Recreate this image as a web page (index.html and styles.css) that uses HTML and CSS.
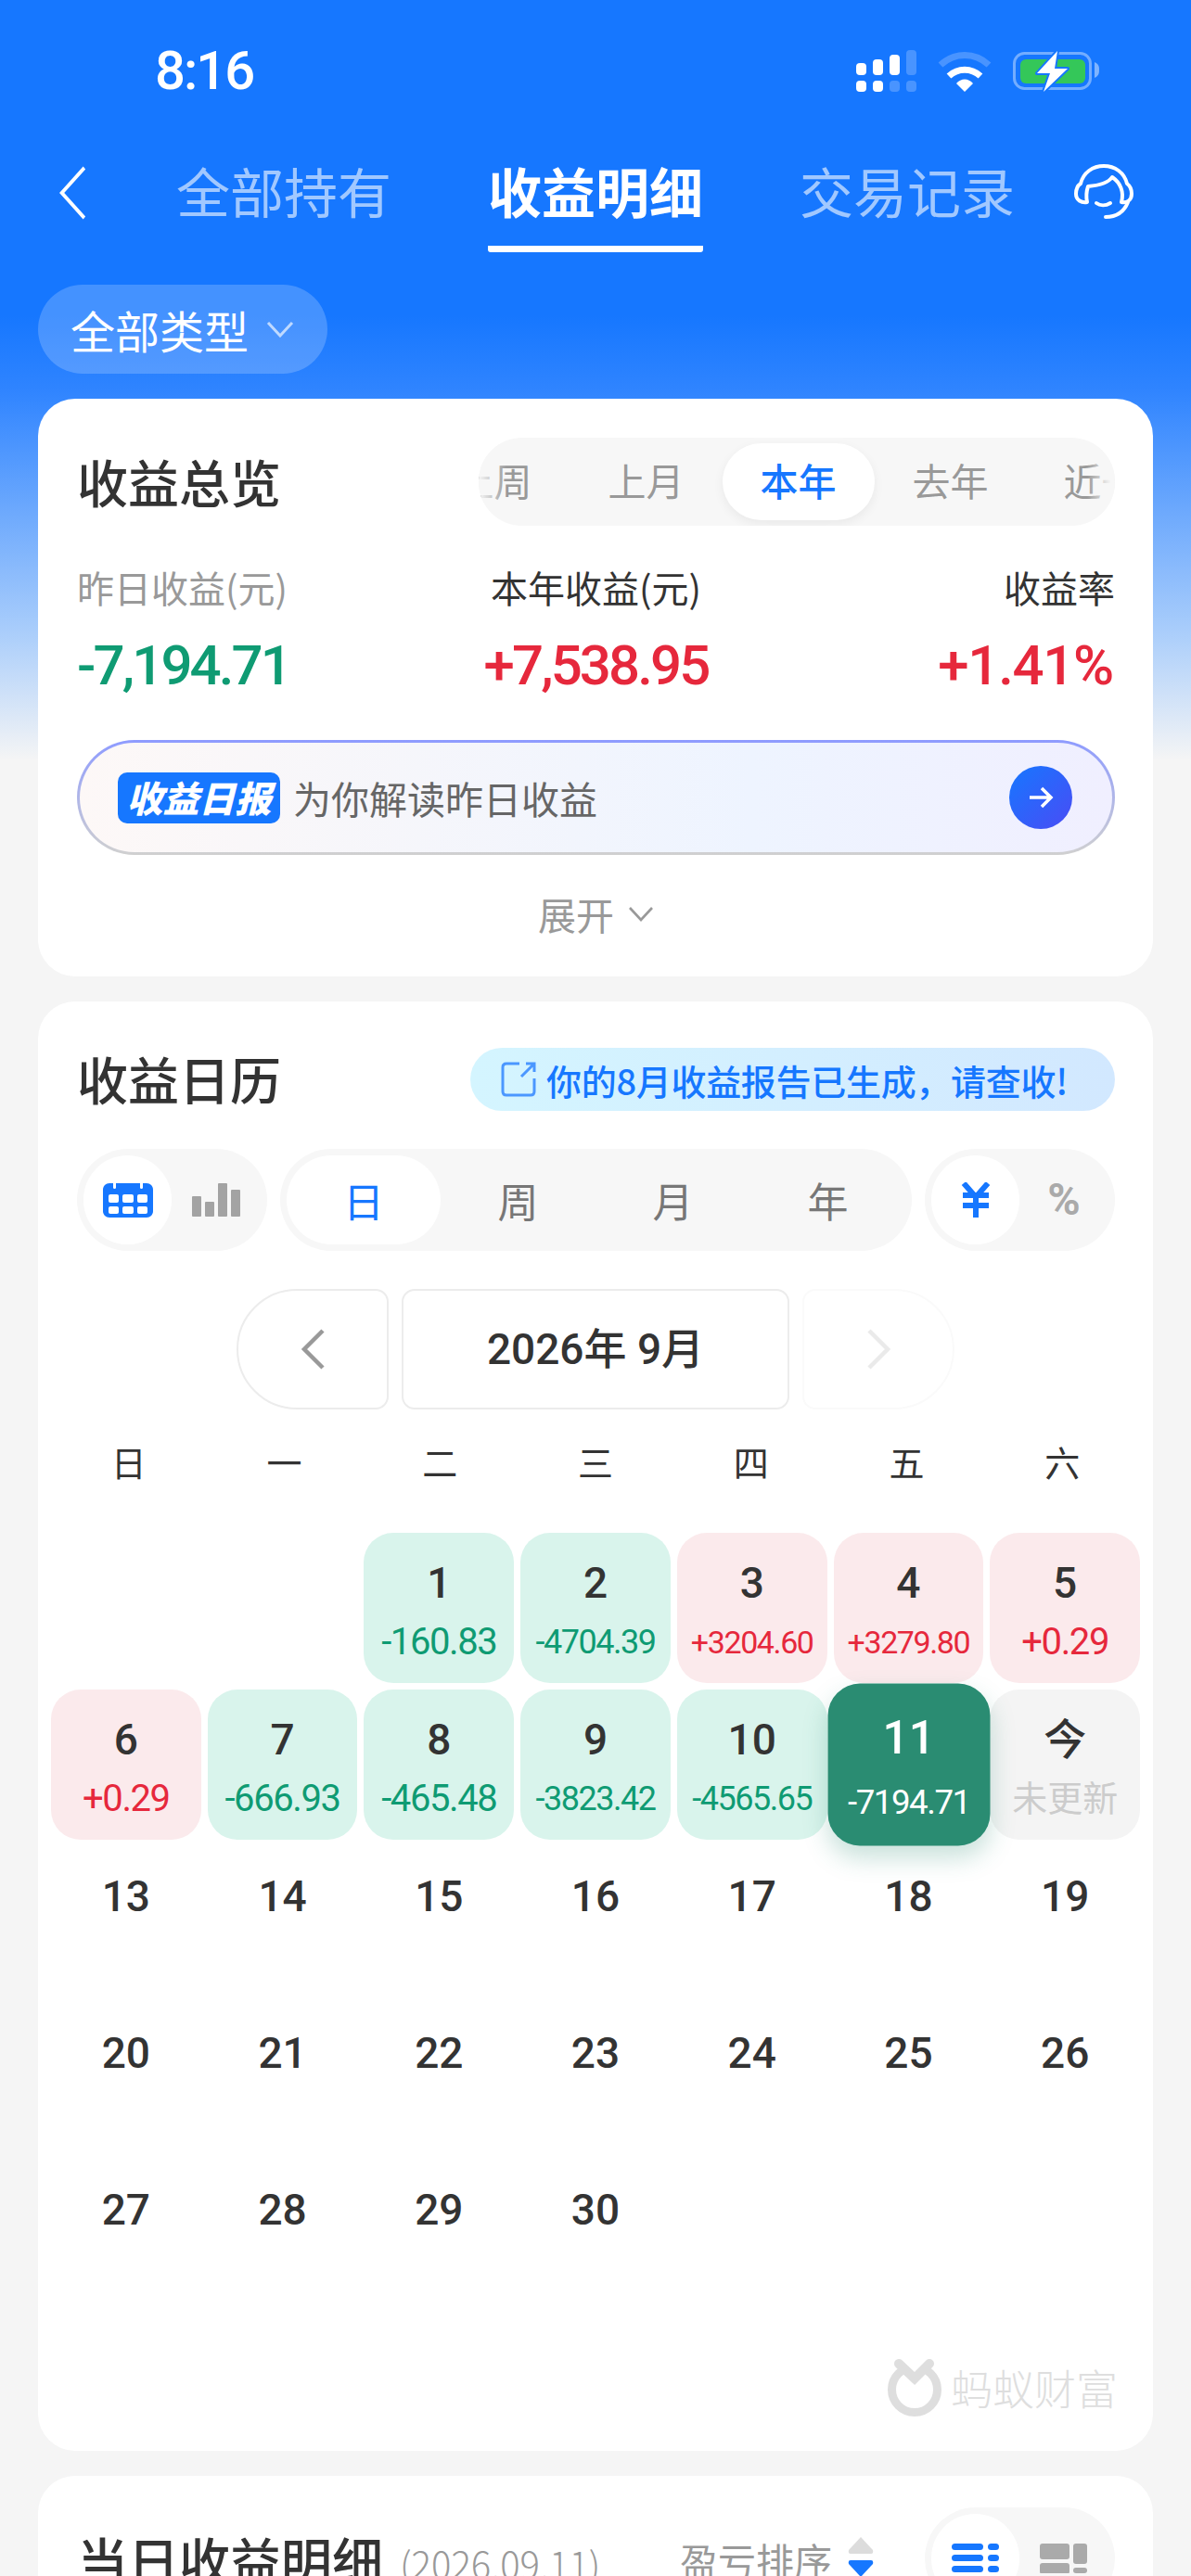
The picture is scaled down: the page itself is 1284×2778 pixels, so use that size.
FILE: index.html
```html
<!DOCTYPE html>
<html lang="zh">
<head>
<meta charset="utf-8">
<title>收益明细</title>
<link rel="stylesheet" href="styles.css">
</head>
<body>
<div class="page">
  <header class="status">
    <span class="time">8:16</span>
    <div class="status-icons">
      <svg class="ic-signal" width="65" height="46" viewBox="0 0 65 46"><g fill="#fff"><rect x="0" y="14" width="11" height="13" rx="4"/><rect x="18" y="10" width="11" height="17" rx="4"/><rect x="36" y="5" width="11" height="22" rx="4"/><rect x="0" y="33" width="11" height="12" rx="4"/><rect x="18" y="33" width="11" height="12" rx="4"/></g><g fill="#fff" fill-opacity=".22"><rect x="54" y="0" width="11" height="27" rx="4"/><rect x="36" y="33" width="11" height="12" rx="4"/><rect x="54" y="33" width="11" height="12" rx="4"/></g></svg>
      <svg class="ic-wifi" width="58" height="44" viewBox="0 0 58 44"><path d="M3 15C18 1 40 1 55 15" fill="none" stroke="#fff" stroke-opacity=".22" stroke-width="7"/><path d="M12 27C22 18 36 18 46 27" fill="none" stroke="#fff" stroke-width="7"/><path d="M20 35C25 29 33 29 38 35L29 44Z" fill="#fff"/></svg>
      <svg class="ic-battery" width="95" height="46" viewBox="0 0 95 46"><rect x="1.5" y="3.5" width="82" height="38" rx="11" fill="none" stroke="#fff" stroke-opacity=".4" stroke-width="3"/><path d="M88 13C92 15 93 17 93 21C93 26 92 28 88 30Z" fill="#fff" fill-opacity=".45"/><rect x="8" y="10" width="70" height="26" rx="6" fill="#34c759"/><path d="M48 1L26 25H40L33 45L59 20H45L48 1Z" fill="#fff" stroke="#1677ff" stroke-width="4" paint-order="stroke" stroke-linejoin="round"/></svg>
    </div>
  </header>

  <nav class="nav">
    <svg class="nav-back" width="34" height="58" viewBox="0 0 34 58"><polyline points="31,2 4,29 31,56" fill="none" stroke="#fff" stroke-width="4" transform="matrix(.9 0 0 1 1 0)"/></svg>
    <a class="nav-tab">全部持有</a>
    <a class="nav-tab nav-tab-active">收益明细</a>
    <a class="nav-tab">交易记录</a>
    <svg class="nav-service" width="64" height="60" viewBox="0 0 64 60"><g fill="none" stroke="#fff" stroke-width="4" stroke-linecap="round" stroke-linejoin="round"><path d="M7 21C10 9 20 2 32 2C44 2 54 9 57 21C61 24 62 28 62 32C62 39 57 42 51 41C54 30 50 20 41 14C37 20 27 23 15 24C13 30 13 36 14 41C8 42 2 39 2 32C2 27 4 23 7 21Z"/><path d="M24 42C28 45 34 45 39 42"/><path d="M58 41C54 51 46 57 34 57"/></g></svg>
  </nav>

  <div class="chip">全部类型<svg width="30" height="18" viewBox="0 0 30 18"><polyline points="2,2 15,16 28,2" fill="none" stroke="#fff" stroke-opacity=".65" stroke-width="3"/></svg></div>

  <main>
    <section class="card card-overview">
      <div class="row-between">
        <h2 class="card-title">收益总览</h2>
        <div class="range">
          <span class="range-item range-first">上周</span>
          <span class="range-item">上月</span>
          <span class="range-item range-on">本年</span>
          <span class="range-item">去年</span>
          <span class="range-item range-last">近一年</span>
        </div>
      </div>
      <div class="metrics">
        <div class="metric"><span class="metric-label muted">昨日收益(元)</span><span class="metric-value green">-7,194.71</span></div>
        <div class="metric metric-mid"><span class="metric-label">本年收益(元)</span><span class="metric-value red">+7,538.95</span></div>
        <div class="metric metric-end"><span class="metric-label">收益率</span><span class="metric-value metric-pct red">+1.41%</span></div>
      </div>
      <div class="daily">
        <span class="daily-badge">收益日报</span>
        <span class="daily-text">为你解读昨日收益</span>
        <span class="daily-go"><svg width="30" height="28" viewBox="0 0 30 28"><path d="M3 14H26M16 4L26 14L16 24" fill="none" stroke="#fff" stroke-width="3.5"/></svg></span>
      </div>
      <div class="expand">展开<svg width="28" height="17" viewBox="0 0 28 17"><polyline points="2,2 14,15 26,2" fill="none" stroke="#999" stroke-width="2.6"/></svg></div>
    </section>

    <section class="card card-calendar">
      <div class="row-between row-calendar">
        <h2 class="card-title">收益日历</h2>
        <div class="notice">
          <svg width="38" height="38" viewBox="0 0 38 38"><path d="M20 2H6C3.500 2 2 3.500 2 6V32C2 34.500 3.500 36 6 36H32C34.500 36 36 34.500 36 32V18M22 16L36 2M27 2H36V11" fill="none" stroke="#4b97ff" stroke-width="3"/></svg>
          <span>你的8月收益报告已生成，请查收!</span>
        </div>
      </div>

      <div class="toggles">
        <div class="seg seg-small">
          <span class="seg-pill"><svg width="56" height="40" viewBox="0 0 56 40"><path d="M8 2H48C52 2 55 5 55 9V32C55 36 52 39 48 39H8C4 39 1 36 1 32V9C1 5 4 2 8 2Z" fill="#1677ff"/><g fill="#fff"><rect x="7" y="14" width="11" height="9" rx="2"/><rect x="22" y="14" width="12" height="9" rx="2"/><rect x="38" y="14" width="11" height="9" rx="2"/><rect x="7" y="27" width="11" height="8" rx="2"/><rect x="22" y="27" width="12" height="8" rx="2"/><rect x="38" y="27" width="11" height="8" rx="2"/><rect x="12" y="0" width="3" height="8" rx="1.500"/><rect x="41" y="0" width="3" height="8" rx="1.500"/></g></svg></span>
          <span class="seg-cell"><svg width="52" height="36" viewBox="0 0 52 36"><g fill="#a3a3a3"><rect x="0" y="14" width="10" height="22" rx="1"/><rect x="14" y="20" width="10" height="16" rx="1"/><rect x="28" y="0" width="10" height="36" rx="1"/><rect x="42" y="7" width="10" height="29" rx="1"/></g></svg></span>
        </div>
        <div class="seg seg-wide">
          <span class="seg-pill seg-text blue">日</span>
          <span class="seg-cell seg-text">周</span>
          <span class="seg-cell seg-text">月</span>
          <span class="seg-cell seg-text">年</span>
        </div>
        <div class="seg seg-small">
          <span class="seg-pill"><svg width="32" height="38" viewBox="0 0 32 38"><path d="M3 1L16 16L29 1M2 14H30M2 25H30M16 15V38" fill="none" stroke="#1677ff" stroke-width="6"/></svg></span>
          <span class="seg-cell seg-sym seg-sym-off">%</span>
        </div>
      </div>

      <div class="month">
        <span class="month-btn month-prev"><svg width="27" height="44" viewBox="0 0 27 44"><polyline points="24,2 4,22 24,42" fill="none" stroke="#999" stroke-width="4.500"/></svg></span>
        <span class="month-label">2026年 9月</span>
        <span class="month-btn month-next"><svg width="27" height="44" viewBox="0 0 27 44"><polyline points="3,2 23,22 3,42" fill="none" stroke="#eaeaea" stroke-width="4.500"/></svg></span>
      </div>

      <div class="week"><span>日</span><span>一</span><span>二</span><span>三</span><span>四</span><span>五</span><span>六</span></div>

      <div class="days">
        <div class="day day-blank"></div>
        <div class="day day-blank"></div>
        <div class="day loss"><b>1</b><i class="amt-l">-160.83</i></div>
        <div class="day loss"><b>2</b><i class="amt-m">-4704.39</i></div>
        <div class="day gain"><b>3</b><i class="amt-s">+3204.60</i></div>
        <div class="day gain"><b>4</b><i class="amt-s">+3279.80</i></div>
        <div class="day gain"><b>5</b><i class="amt-l">+0.29</i></div>
        <div class="day gain"><b>6</b><i class="amt-l">+0.29</i></div>
        <div class="day loss"><b>7</b><i class="amt-l">-666.93</i></div>
        <div class="day loss"><b>8</b><i class="amt-l">-465.48</i></div>
        <div class="day loss"><b>9</b><i class="amt-m">-3823.42</i></div>
        <div class="day loss"><b>10</b><i class="amt-m">-4565.65</i></div>
        <div class="day day-selected"><b>11</b><i class="amt-s">-7194.71</i></div>
        <div class="day day-today"><b>今</b><i class="amt-t">未更新</i></div>
        <div class="day"><b>13</b></div>
        <div class="day"><b>14</b></div>
        <div class="day"><b>15</b></div>
        <div class="day"><b>16</b></div>
        <div class="day"><b>17</b></div>
        <div class="day"><b>18</b></div>
        <div class="day"><b>19</b></div>
        <div class="day"><b>20</b></div>
        <div class="day"><b>21</b></div>
        <div class="day"><b>22</b></div>
        <div class="day"><b>23</b></div>
        <div class="day"><b>24</b></div>
        <div class="day"><b>25</b></div>
        <div class="day"><b>26</b></div>
        <div class="day"><b>27</b></div>
        <div class="day"><b>28</b></div>
        <div class="day"><b>29</b></div>
        <div class="day"><b>30</b></div>
      </div>

      <div class="brand">
        <svg width="60" height="62" viewBox="0 0 60 62"><circle cx="30" cy="33" r="24.500" fill="none" stroke="#dedede" stroke-width="9"/><polygon points="8,0 52,0 32,30 28,30" fill="#fff"/><polyline points="13,5 30,21 46,5" fill="none" stroke="#dedede" stroke-width="10" stroke-linejoin="miter" stroke-linecap="round"/></svg>
        <span>蚂蚁财富</span>
      </div>
    </section>

    <section class="card card-detail">
      <div class="detail-head">
        <h2 class="card-title">当日收益明细</h2>
        <span class="detail-date">(2026.09.11)</span>
        <span class="detail-sort">盈亏排序</span>
        <svg class="detail-sort-ic" width="28" height="44" viewBox="0 0 28 44"><path d="M14 1L27 15Q28 19 25 19H3Q0 19 1 15Z" fill="#dcdcdc"/><path d="M3 26H25Q28 26 27 30L14 44L1 30Q0 26 3 26Z" fill="#1677ff"/></svg>
        <div class="seg seg-small seg-detail">
          <span class="seg-pill"><svg width="52" height="32" viewBox="0 0 52 32"><g fill="#1677ff"><rect x="0" y="0" width="34" height="7" rx="3.500"/><rect x="39" y="0" width="12" height="7" rx="3.500"/><rect x="0" y="12" width="34" height="7" rx="3.500"/><rect x="39" y="12" width="12" height="7" rx="3.500"/><rect x="0" y="24" width="34" height="7" rx="3.500"/><rect x="39" y="24" width="12" height="7" rx="3.500"/></g></svg></span>
          <span class="seg-cell"><svg width="52" height="32" viewBox="0 0 52 32"><g fill="#aaa"><rect x="0" y="0" width="32" height="17" rx="3"/><rect x="36" y="0" width="15" height="22" rx="3"/><rect x="0" y="21" width="32" height="12" rx="3"/><rect x="36" y="26" width="15" height="6" rx="3"/></g></svg></span>
        </div>
      </div>
    </section>
  </main>
</div>
</body>
</html>
```

FILE: styles.css
```css
* { box-sizing: border-box; margin: 0; padding: 0; }
html, body { height: 2778px; overflow: hidden; }
body {
  background: #f5f5f5 linear-gradient(#1677ff 0, #1677ff 340px, #2f84ff 420px, #a9cdfb 680px, #f5f5f5 820px) no-repeat 0 0 / 100% 820px;
  font-family: "Noto Sans CJK SC", Roboto, sans-serif;
  color: #333;
}
i { font-style: normal; }

.status { height: 152px; display: flex; align-items: center; justify-content: space-between; padding: 0 97px 0 167px; }
.time { font: 500 58px/1 Roboto, sans-serif; color: #fff; letter-spacing: -2px; }
.status-icons { display: flex; align-items: center; gap: 23px; margin-top: 2px; }

.nav { height: 120px; display: flex; padding-left: 62px; position: relative; }
.nav-back { margin-top: 27px; margin-right: 94px; flex: none; }
.nav-tab { width: 232px; margin-right: 104px; text-align: center; font-size: 58px; line-height: 106px; color: rgba(255,255,255,.6); white-space: nowrap; }
.nav-tab-active { color: #fff; font-weight: 700; border-bottom: 7px solid #fff; border-radius: 0 0 3px 3px; height: 120px; }
.nav-service { position: absolute; left: 1158px; top: 25px; }

.chip { margin: 35px 0 0 41px; width: 312px; height: 96px; border-radius: 48px; background: rgba(255,255,255,.2); display: flex; align-items: center; padding-left: 35px; gap: 19px; font-size: 48px; color: #fff; }

.card { background: #fff; border-radius: 40px; margin: 27px 41px 0; padding: 0 41px 0 42px; }
.row-between { display: flex; justify-content: space-between; align-items: center; }
.card-title { font-size: 55px; font-weight: 500; line-height: 66px; color: #333; margin-bottom: 4px; white-space: nowrap; }

.card-overview { height: 623px; padding-top: 42px; }
.range { width: 686px; height: 95px; background: #f7f7f7; border-radius: 47px; display: flex; justify-content: center; align-items: center; overflow: hidden; position: relative; }
.range::before, .range::after { content: ""; position: absolute; top: 0; bottom: 0; width: 30px; z-index: 1; }
.range::before { left: 0; background: linear-gradient(90deg, #f7f7f7, rgba(247,247,247,0)); }
.range::after { right: 0; background: linear-gradient(270deg, #f7f7f7 15%, rgba(247,247,247,0)); }
.range-item { flex: none; width: 164px; height: 83px; line-height: 79px; text-align: center; font-size: 41px; color: #999; }
.range-on { background: #fff; border-radius: 42px; color: #1677ff; font-weight: 500; box-shadow: 0 4px 12px rgba(0,0,0,.06); }
.range-first { margin-left: 3px; white-space: nowrap; }
.range-last { text-align: left; padding-left: 40px; white-space: nowrap; }

.metrics { display: flex; justify-content: space-between; margin-top: 42px; }
.metric { display: flex; flex-direction: column; width: 260px; }
.metric-mid { align-items: center; }
.metric-end { align-items: flex-end; }
.metric-label { font-size: 40px; line-height: 48px; color: #333; white-space: nowrap; }
.muted { color: #999; }
.metric-value { margin-top: 25px; font: 500 60px/72px Roboto, sans-serif; letter-spacing: -2.900px; white-space: nowrap; }
.metric-pct { letter-spacing: -1.300px; margin-right: 2px; }
.green { color: #0f9b73; }
.red { color: #e6283c; }
.blue { color: #1677ff; }

.daily { margin-top: 44px; height: 124px; border: 3px solid transparent; border-radius: 62px; display: flex; align-items: center; padding: 0 41px; background: linear-gradient(90deg, #fdf8f7, #eef4ff 65%, #f0efff) padding-box, linear-gradient(#8e9bff, #d0d0d0) border-box; }
.daily-badge { width: 175px; height: 55px; border-radius: 10px; background: #1677ff; color: #fff; font-size: 39px; line-height: 52px; font-weight: 900; font-style: italic; text-align: center; white-space: nowrap; }
.daily-text { margin-left: 14px; font-size: 41px; line-height: 50px; color: #666; flex: 1; }
.daily-go { width: 68px; height: 68px; border-radius: 50%; background: linear-gradient(135deg, #1677ff, #4a4cf5); display: flex; align-items: center; justify-content: center; margin-right: 2px; }

.expand { margin-top: 39px; display: flex; align-items: center; justify-content: center; gap: 15px; font-size: 41px; line-height: 48px; color: #999; }

.card-calendar { height: 1563px; padding-top: 50px; }
.row-calendar { height: 68px; align-items: center; }
.notice { width: 695px; height: 68px; border-radius: 34px; background: linear-gradient(90deg, #d4f5ff, #d2e8ff); display: flex; align-items: center; padding-left: 33px; gap: 11px; color: #1677ff; font-size: 38px; font-weight: 500; white-space: nowrap; letter-spacing: -.300px; }

.toggles { display: flex; justify-content: space-between; margin-top: 41px; }
.seg { height: 110px; background: #f7f7f7; border-radius: 55px; padding: 7px; display: flex; align-items: center; }
.seg-small { width: 205px; }
.seg-wide { width: 681px; }
.seg-pill { height: 96px; width: 95px; flex: none; background: #fff; border-radius: 48px; display: flex; align-items: center; justify-content: center; }
.seg-cell { flex: 1; display: flex; align-items: center; justify-content: center; height: 96px; }
.seg-text { font-size: 44px; color: #777; }
.seg-wide .seg-pill { width: 166px; color: #1677ff; }
.seg-sym { font: 700 48px/1 Roboto, sans-serif; }
.seg-sym-off { color: #aaa; }

.month { display: flex; justify-content: center; gap: 14px; margin: 41px 0 0 -1px; height: 130px; }
.month-btn { width: 164px; border: 2px solid #ececec; display: flex; align-items: center; justify-content: center; }
.month-prev { border-radius: 65px 14px 14px 65px; }
.month-next { border-radius: 14px 65px 65px 14px; border-color: #fafafa; }
.month-label { width: 418px; border: 2px solid #ececec; border-radius: 14px; display: flex; align-items: center; justify-content: center; font: 500 46px/1 Roboto, "Noto Sans CJK SC", sans-serif; color: #333; }

.week { display: grid; grid-template-columns: repeat(7, 1fr); margin: 31px -27px 0 -28px; font-size: 38px; line-height: 50px; text-align: center; color: #333; }

.days { display: grid; grid-template-columns: repeat(7, 1fr); grid-auto-rows: 162px; gap: 7px; margin: 52px -27px 0 -28px; }
.day { border-radius: 32px; display: flex; flex-direction: column; align-items: center; padding-top: 22px; }
.day b { font: 500 46px/64px Roboto, "Noto Sans CJK SC", sans-serif; color: #333; }
.day i { font-family: Roboto, "Noto Sans CJK SC", sans-serif; line-height: 64px; white-space: nowrap; }
.amt-l { font-size: 40px; letter-spacing: -1.400px; }
.amt-m { font-size: 36px; letter-spacing: -1.500px; }
.amt-s { font-size: 34px; letter-spacing: -1.400px; }
.amt-t { font-size: 38px; letter-spacing: 0; color: #ccc; }
.loss { background: #d9f4ec; }
.loss i { color: #0f9b73; }
.gain { background: #fbeaec; }
.gain i { color: #e6283c; }
.day-today { background: #f4f4f4; }
.day-selected { background: #2a8c72; transform: scale(1.08); position: relative; z-index: 1; box-shadow: 0 12px 24px rgba(42,140,114,.25); }
.day-selected b, .day-selected i { color: #fff; }

.brand { margin: 51px -3px 0 0; display: flex; justify-content: flex-end; align-items: center; gap: 9px; font-size: 45px; font-weight: 300; color: #dedede; }

.card-detail { height: 400px; padding-top: 34px; }
.detail-head { display: flex; align-items: flex-start; position: relative; }
.detail-head .card-title { margin-top: 22px; }
.detail-date { margin: 32px 0 0 18px; font-size: 40px; font-weight: 300; line-height: 56px; color: #999; white-space: nowrap; }
.detail-sort { margin: 28px 0 0 auto; font-size: 41px; line-height: 56px; color: #999; white-space: nowrap; }
.detail-sort-ic { margin: 31px 0 0 17px; }
.seg-detail { margin-left: 55px; }
```
